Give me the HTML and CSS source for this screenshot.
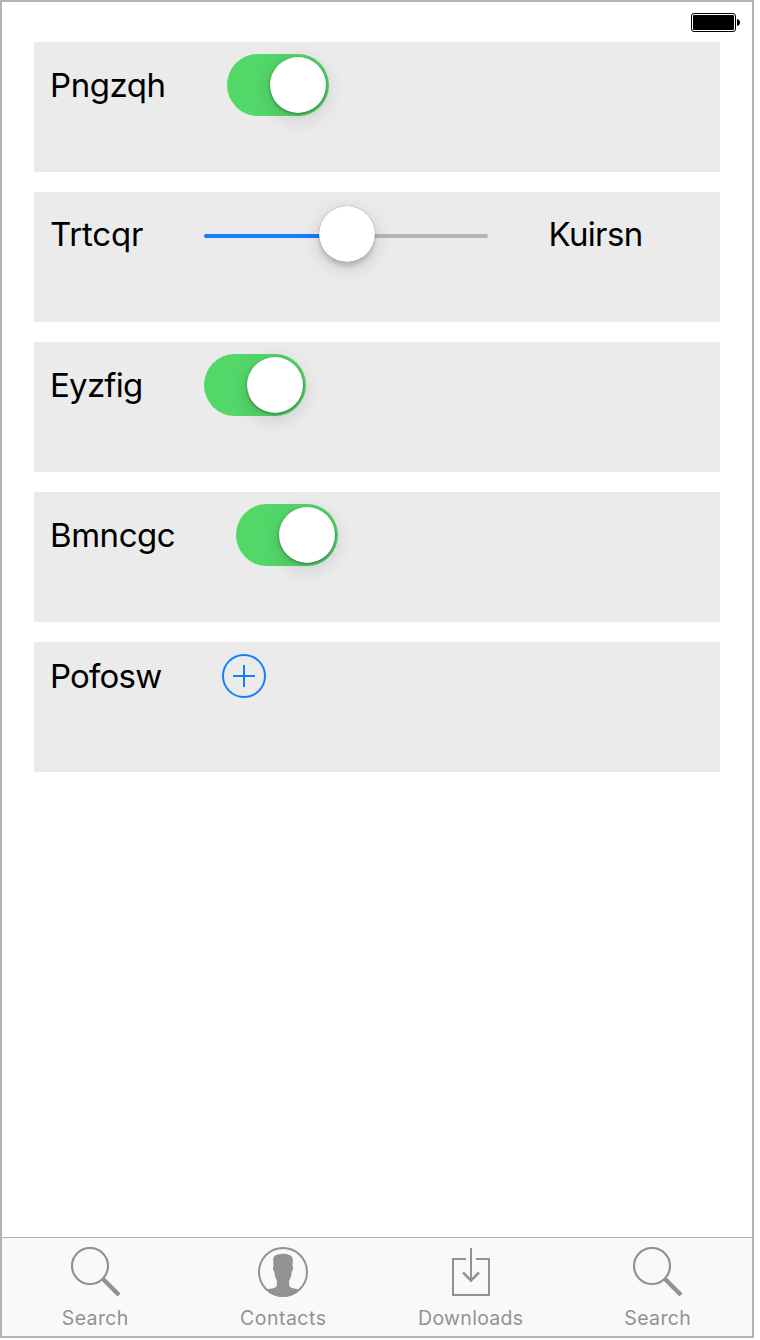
FILE: index.html
```html
<!DOCTYPE html>
<html lang="en">
<head>
<meta charset="utf-8">
<title>Settings</title>
<link rel="stylesheet" href="styles.css">
</head>
<body>
<div class="screen">
  <header class="status">
    <svg width="50" height="20" viewBox="0 0 50 20">
      <rect x="1.5" y="1.5" width="44" height="18" rx="2.5" fill="#fff" stroke="#000"/>
      <rect x="3" y="3" width="41" height="15" rx="1" fill="#000"/>
      <path d="M47 7q3 .5 3 3.5t-3 3.500z" fill="#000"/>
    </svg>
  </header>
  <main class="cards">
    <section class="card">
      <span class="label pngzqh">Pngzqh</span>
      <span class="switch"><span class="knob"></span></span>
    </section>
    <section class="card">
      <span class="label trtcqr">Trtcqr</span>
      <span class="slider"><span class="fill"></span><span class="knob thumb"></span><span class="rest"></span></span>
      <span class="label kuirsn">Kuirsn</span>
    </section>
    <section class="card">
      <span class="label eyzfig">Eyzfig</span>
      <span class="switch"><span class="knob"></span></span>
    </section>
    <section class="card">
      <span class="label bmncgc">Bmncgc</span>
      <span class="switch"><span class="knob"></span></span>
    </section>
    <section class="card">
      <span class="label pofosw">Pofosw</span>
      <svg class="add" width="44" height="44" viewBox="0 0 44 44" fill="none" stroke="#157efb" stroke-width="2">
        <circle cx="22" cy="22" r="21"/>
        <path d="M11 22H33M22 11V33"/>
      </svg>
    </section>
  </main>
  <nav class="tabs">
    <a class="tab">
      <svg width="50" height="50" viewBox="0 0 50 50" fill="none" stroke="#929292">
        <circle cx="19" cy="19" r="18" stroke-width="2.200"/>
        <path d="M32 32L48 48" stroke-width="4.500"/>
      </svg>
      <span class="tab-name search">Search</span>
    </a>
    <a class="tab">
      <svg width="50" height="50" viewBox="0 0 50 50">
        <circle cx="25" cy="25" r="24" fill="none" stroke="#929292" stroke-width="2"/>
        <path fill="#929292" d="M15.200 13C15.200 8.500 19 7 22 7.200C24 6.700 28 6.600 30.500 7.700C34 8.500 35 11 34.800 14L34.500 19C35.700 20 35 23.500 33.700 25C33.300 29 32.700 31 31.200 33.500L31.200 38C31.700 42 37 41 41.500 42.800C37 48 31 50 25 50C19 50 13 48 8.500 42.800C13 41 18.400 42 18.900 38L18.900 33.500C17.300 31 16.800 29 16.300 25C15 23.500 14.300 20 15.500 19Z"/>
      </svg>
      <span class="tab-name contacts">Contacts</span>
    </a>
    <a class="tab">
      <svg width="50" height="50" viewBox="0 0 50 50" fill="none" stroke="#929292" stroke-width="2">
        <path d="M20 12H7V48H43V12H30M25 1V35"/>
        <path d="M17 25.500L25 33.500L33 25.500" stroke-width="2.500"/>
      </svg>
      <span class="tab-name downloads">Downloads</span>
    </a>
    <a class="tab">
      <svg width="50" height="50" viewBox="0 0 50 50" fill="none" stroke="#929292">
        <circle cx="19" cy="19" r="18" stroke-width="2.200"/>
        <path d="M32 32L48 48" stroke-width="4.500"/>
      </svg>
      <span class="tab-name search">Search</span>
    </a>
  </nav>
</div>
</body>
</html>
```
FILE: styles.css
```css
body {
  margin: 0;
  background: #fff;
  font-family: Inter, "Liberation Sans", sans-serif;
}
.screen {
  box-sizing: border-box;
  width: 754px;
  height: 1338px;
  border: 2px solid #b3b3b3;
  display: flex;
  flex-direction: column;
}
.status {
  box-sizing: border-box;
  height: 40px;
  padding: 10px 12px 0 0;
  display: flex;
  justify-content: flex-end;
  align-items: flex-start;
}
.cards {
  flex: 1;
  padding: 0 32px;
  display: flex;
  flex-direction: column;
  gap: 20px;
}
.card {
  box-sizing: border-box;
  height: 130px;
  padding: 12px 16px;
  background: #ebebeb;
  display: flex;
  align-items: flex-start;
  gap: 60px;
}
.label {
  flex: none;
  margin-top: 11px;
  font-size: 33px;
  line-height: 40px;
  white-space: nowrap;
}
.pngzqh { width: 117px; letter-spacing: -.45px; }
.trtcqr { width: 94px; margin-top: 10px; letter-spacing: -.2px; }
.kuirsn { width: 94px; margin-top: 10px; letter-spacing: -.65px; text-indent: .5px; }
.eyzfig { width: 94px; letter-spacing: -.75px; }
.bmncgc { width: 126px; letter-spacing: -.45px; }
.pofosw { width: 112px; margin-top: 2px; letter-spacing: -.8px; }
.switch {
  box-sizing: border-box;
  width: 102px;
  height: 62px;
  padding: 3px;
  border-radius: 31px;
  background: #53d769;
  display: flex;
  justify-content: flex-end;
}
.knob {
  flex: none;
  width: 56px;
  height: 56px;
  border-radius: 50%;
  background: #fff;
  box-shadow: 0 1px 3px rgba(0, 0, 0, .4), 0 5px 20px rgba(0, 0, 0, .16);
}
.slider {
  width: 284px;
  height: 60px;
  display: flex;
  align-items: center;
}
.fill,
.rest {
  height: 4px;
  margin-top: 4px;
}
.fill {
  width: 121px;
  background: #157efb;
  border-radius: 2px 0 0 2px;
  margin-right: -6px;
}
.rest {
  flex: 1;
  background: #b5b5b5;
  border-radius: 0 2px 2px 0;
  margin-left: -6px;
}
.thumb {
  position: relative;
  z-index: 1;
  box-shadow: 0 0 1px rgba(0, 0, 0, .5), 0 5px 4px rgba(0, 0, 0, .13), 0 5px 20px rgba(0, 0, 0, .15);
}
.tabs {
  box-sizing: border-box;
  height: 99px;
  border-top: 1px solid #b2b2b2;
  background: #f9f9f9;
  display: flex;
}
.tab {
  flex: 1;
  padding-top: 9px;
  display: flex;
  flex-direction: column;
  align-items: center;
  color: #929292;
}
.tab-name {
  margin-top: 9px;
  font-size: 19.5px;
  line-height: 24px;
}
.search {
  letter-spacing: .35px;
  margin-right: 1px;
}
.contacts { letter-spacing: .5px; }
.downloads { letter-spacing: .3px; }
```
